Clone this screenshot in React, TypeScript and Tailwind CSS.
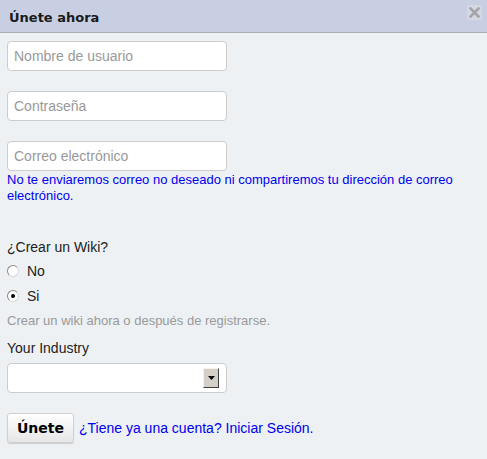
import { useState } from "react";

const FONT = { fontFamily: '"Liberation Sans", Arial, sans-serif' };

function TextInput({ placeholder, type = "text" }: { placeholder: string; type?: string }) {
  return (
    <input
      type={type}
      placeholder={placeholder}
      className="block w-[220px] h-[30px] rounded-[4px] border border-[#cccccc] bg-white px-[6px] text-[14px] text-[#333] placeholder:text-[#999999] outline-none"
      style={FONT}
    />
  );
}

function Radio({ checked, label, onClick }: { checked: boolean; label: string; onClick: () => void }) {
  return (
    <label className="flex h-[16px] items-center gap-[8px] cursor-pointer" onClick={onClick}>
      <span className="relative flex h-[12px] w-[12px] items-center justify-center rounded-full border border-[#8a8a8a] border-r-[#d8d8d8] border-b-[#d8d8d8] bg-white">
        {checked && <span className="h-[4px] w-[4px] rounded-full bg-black" />}
      </span>
      <span className="text-[14px] leading-[16px] text-[#222]">{label}</span>
    </label>
  );
}

export default function App() {
  const [wiki, setWiki] = useState<"no" | "si">("si");

  return (
    <div className="w-[487px] h-[459px] bg-[#edf1f4] overflow-hidden" style={FONT}>
      {/* Title bar */}
      <div className="relative flex h-[33px] items-center border-b border-[#a9adb6] bg-[#c9cfe2] pl-[9px] pt-[3px]">
        <h1 className="text-[13px] font-bold text-[#1a1a1a]" style={{ fontFamily: '"DejaVu Sans", Verdana, sans-serif' }}>
          Únete ahora
        </h1>
        <button
          aria-label="Cerrar"
          className="absolute right-[5px] top-[5px] flex h-[15px] w-[15px] items-center justify-center rounded-[2px] bg-[#d5d8e3]"
        >
          <svg width="11" height="11" viewBox="0 0 11 11">
            <path d="M1.5 1.5 L9.5 9.5 M9.5 1.5 L1.5 9.5" stroke="#a2a4a8" strokeWidth="2.6" strokeLinecap="square" />
          </svg>
        </button>
      </div>

      {/* Form */}
      <div className="flex flex-col px-[7px] pt-[8px]">
        <div className="flex flex-col gap-[20px]">
          <TextInput placeholder="Nombre de usuario" />
          <TextInput placeholder="Contraseña" type="password" />
          <TextInput placeholder="Correo electrónico" />
        </div>
        <p className="mt-[1px] w-[460px] text-[13px] leading-[16px] text-[#0000ee]">
          No te enviaremos correo no deseado ni compartiremos tu dirección de correo electrónico.
        </p>

        <p className="mt-[35px] text-[14px] leading-[16px] text-[#222]">¿Crear un Wiki?</p>
        <div className="mt-[8px] flex flex-col gap-[9px]">
          <Radio checked={wiki === "no"} label="No" onClick={() => setWiki("no")} />
          <Radio checked={wiki === "si"} label="Si" onClick={() => setWiki("si")} />
        </div>
        <p className="mt-[9px] text-[13px] leading-[16px] text-[#999999]">Crear un wiki ahora o después de registrarse.</p>

        <p className="mt-[11px] text-[14px] leading-[16px] text-[#222]">Your Industry</p>
        <div className="mt-[7px] flex h-[30px] w-[220px] items-center justify-end rounded-[4px] border border-[#cccccc] bg-white pr-[7px]">
          <span className="flex h-[20px] w-[16px] items-center justify-center border border-t-[#f4f2ee] border-l-[#f4f2ee] border-r-[#404040] border-b-[#404040] bg-[#d4d0c8]">
            <svg width="7" height="4" viewBox="0 0 7 4">
              <path d="M0 0 H7 L3.5 4 Z" fill="#000" />
            </svg>
          </span>
        </div>

        <div className="mt-[20px] flex items-center gap-[5px]">
          <button
            className="h-[30px] w-[67px] rounded-[3px] border border-[#d0d0d0] bg-gradient-to-b from-[#ffffff] to-[#e6e6e6] text-[14px] font-bold text-black shadow-[0_1px_1px_rgba(0,0,0,0.15)]"
            style={{ fontFamily: '"DejaVu Sans", Verdana, sans-serif' }}
          >
            Únete
          </button>
          <a href="#" className="text-[14px] leading-[16px] text-[#0000ee]">
            ¿Tiene ya una cuenta? Iniciar Sesión.
          </a>
        </div>
      </div>
    </div>
  );
}
